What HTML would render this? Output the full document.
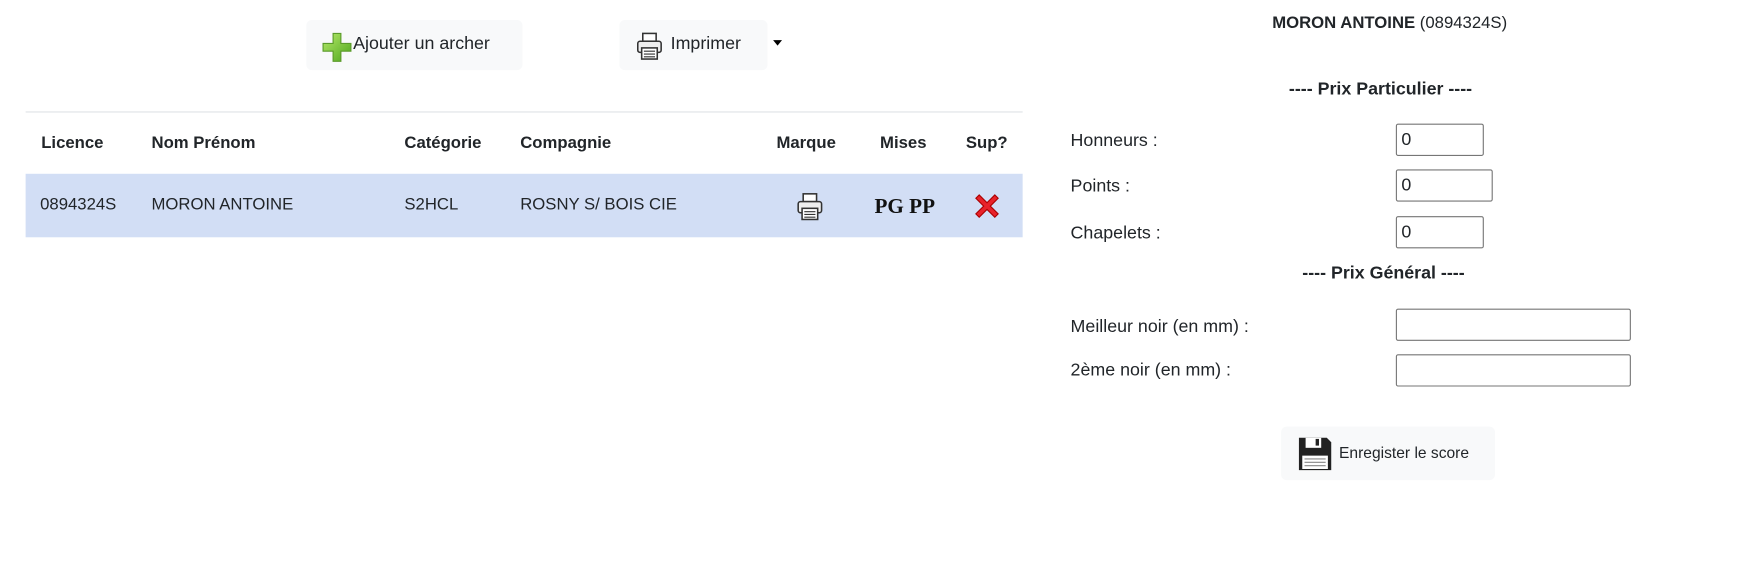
<!DOCTYPE html>
<html><head><meta charset="utf-8"><style>
html,body{margin:0;padding:0;background:#fff;overflow:hidden;width:1747px;height:570px}
#w{position:absolute;left:0;top:0;width:1570px;height:512px;transform:scale(1.114);transform-origin:0 0;font-family:"Liberation Sans",sans-serif;color:#212529}
.a{position:absolute;white-space:nowrap}
.btn{position:absolute;background:#f8f9fa;border-radius:5px}
.th{position:absolute;top:120px;font-weight:bold;font-size:15px}
.td{position:absolute;top:175px;font-size:15px}
.lbl{position:absolute;left:961px;font-size:16px}
.in{position:absolute;left:1253px;border:1px solid #767676;border-radius:2px;height:29px;box-sizing:border-box;font-size:16px;padding-left:4px;line-height:27px;background:#fff}
</style></head><body><div id="w">
<div class="btn" style="left:275px;top:18px;width:194px;height:45px"></div>
<svg class="a" style="left:289px;top:29px" width="27" height="27" viewBox="0 0 27 27"><defs><linearGradient id="g" x1="0" y1="0" x2="1" y2="1"><stop offset="0" stop-color="#b6ea6a"/><stop offset="1" stop-color="#4ea51c"/></linearGradient></defs><path d="M10 1h7v9h9v7h-9v9h-7v-9h-9v-7h9z" fill="url(#g)" stroke="#5a9a2a" stroke-width="1"/></svg>
<div class="a" style="left:317px;top:31px;font-size:16px">Ajouter un archer</div>
<div class="btn" style="left:556px;top:18px;width:133px;height:45px"></div>
<svg class="a" style="left:571px;top:29px" width="24" height="25" viewBox="0 0 24 25"><rect x="6" y="1" width="12" height="7" fill="#fff" stroke="#333" stroke-width="1.4"/><rect x="1.5" y="8" width="21" height="10" rx="2" fill="#eee" stroke="#333" stroke-width="1.4"/><rect x="5" y="14" width="14" height="10" fill="#fff" stroke="#333" stroke-width="1.4"/><path d="M7 17h10M7 19.5h10M7 22h10" stroke="#333"/></svg>
<div class="a" style="left:602px;top:31px;font-size:16px">Imprimer</div>
<div class="a" style="left:694px;top:36px;width:0;height:0;border-left:4px solid transparent;border-right:4px solid transparent;border-top:5px solid #000"></div>
<div class="a" style="left:23px;top:100px;width:895px;height:1px;background:#dee2e6"></div>
<div class="th" style="left:37px">Licence</div><div class="th" style="left:136px">Nom Prénom</div><div class="th" style="left:363px">Catégorie</div><div class="th" style="left:467px">Compagnie</div><div class="th" style="left:697px">Marque</div><div class="th" style="left:790px">Mises</div><div class="th" style="left:867px">Sup?</div>
<div class="a" style="left:23px;top:156px;width:895px;height:57px;background:#d2def5"></div>
<div class="td" style="left:36px">0894324S</div><div class="td" style="left:136px">MORON ANTOINE</div><div class="td" style="left:363px">S2HCL</div><div class="td" style="left:467px">ROSNY S/ BOIS CIE</div>
<svg class="a" style="left:715px;top:173px" width="24" height="25" viewBox="0 0 24 25"><rect x="6" y="1" width="12" height="7" fill="#fff" stroke="#333" stroke-width="1.4"/><rect x="1.5" y="8" width="21" height="10" rx="2" fill="#eee" stroke="#333" stroke-width="1.4"/><rect x="5" y="14" width="14" height="10" fill="#fff" stroke="#333" stroke-width="1.4"/><path d="M7 17h10M7 19.5h10M7 22h10" stroke="#333"/></svg>
<div class="a" style="left:785px;top:175px;font-family:'Liberation Serif',serif;font-weight:bold;font-size:19px;color:#111">PG PP</div>
<svg class="a" style="left:872px;top:171px" width="28" height="28" viewBox="0 0 28 28"><path d="M4 7l3-3 7 7 7-7 3 3-7 7 7 7-3 3-7-7-7 7-3-3 7-7z" fill="#e8222a" stroke="#a00" stroke-width="1"/></svg>
<div class="a" style="left:1142px;top:12px;font-size:15px"><b>MORON ANTOINE</b> (0894324S)</div>
<div class="a" style="left:1157px;top:72px;font-size:16px;font-weight:bold">---- Prix Particulier ----</div>
<div class="lbl" style="top:118px">Honneurs :</div><div class="in" style="top:111px;width:79px">0</div>
<div class="lbl" style="top:159px">Points :</div><div class="in" style="top:152px;width:87px">0</div>
<div class="lbl" style="top:201px">Chapelets :</div><div class="in" style="top:194px;width:79px">0</div>
<div class="a" style="left:1169px;top:237px;font-size:16px;font-weight:bold">---- Prix Général ----</div>
<div class="lbl" style="top:285px">Meilleur noir (en mm) :</div><div class="in" style="top:277px;width:211px"></div>
<div class="lbl" style="top:324px">2ème noir (en mm) :</div><div class="in" style="top:318px;width:211px"></div>
<div class="btn" style="left:1150px;top:383px;width:192px;height:48px"></div>
<svg class="a" style="left:1164px;top:391px" width="33" height="33" viewBox="0 0 33 33"><path d="M2 2h25l4 4v25H2z" fill="#222"/><rect x="8" y="2" width="14" height="9" fill="#fff"/><rect x="17" y="3" width="3" height="6" fill="#222"/><rect x="5" y="18" width="23" height="12" fill="#fff"/><path d="M7 21h19M7 24h19M7 27h19" stroke="#888"/></svg>
<div class="a" style="left:1202px;top:398px;font-size:14px">Enregister le score</div>
</div></body></html>
